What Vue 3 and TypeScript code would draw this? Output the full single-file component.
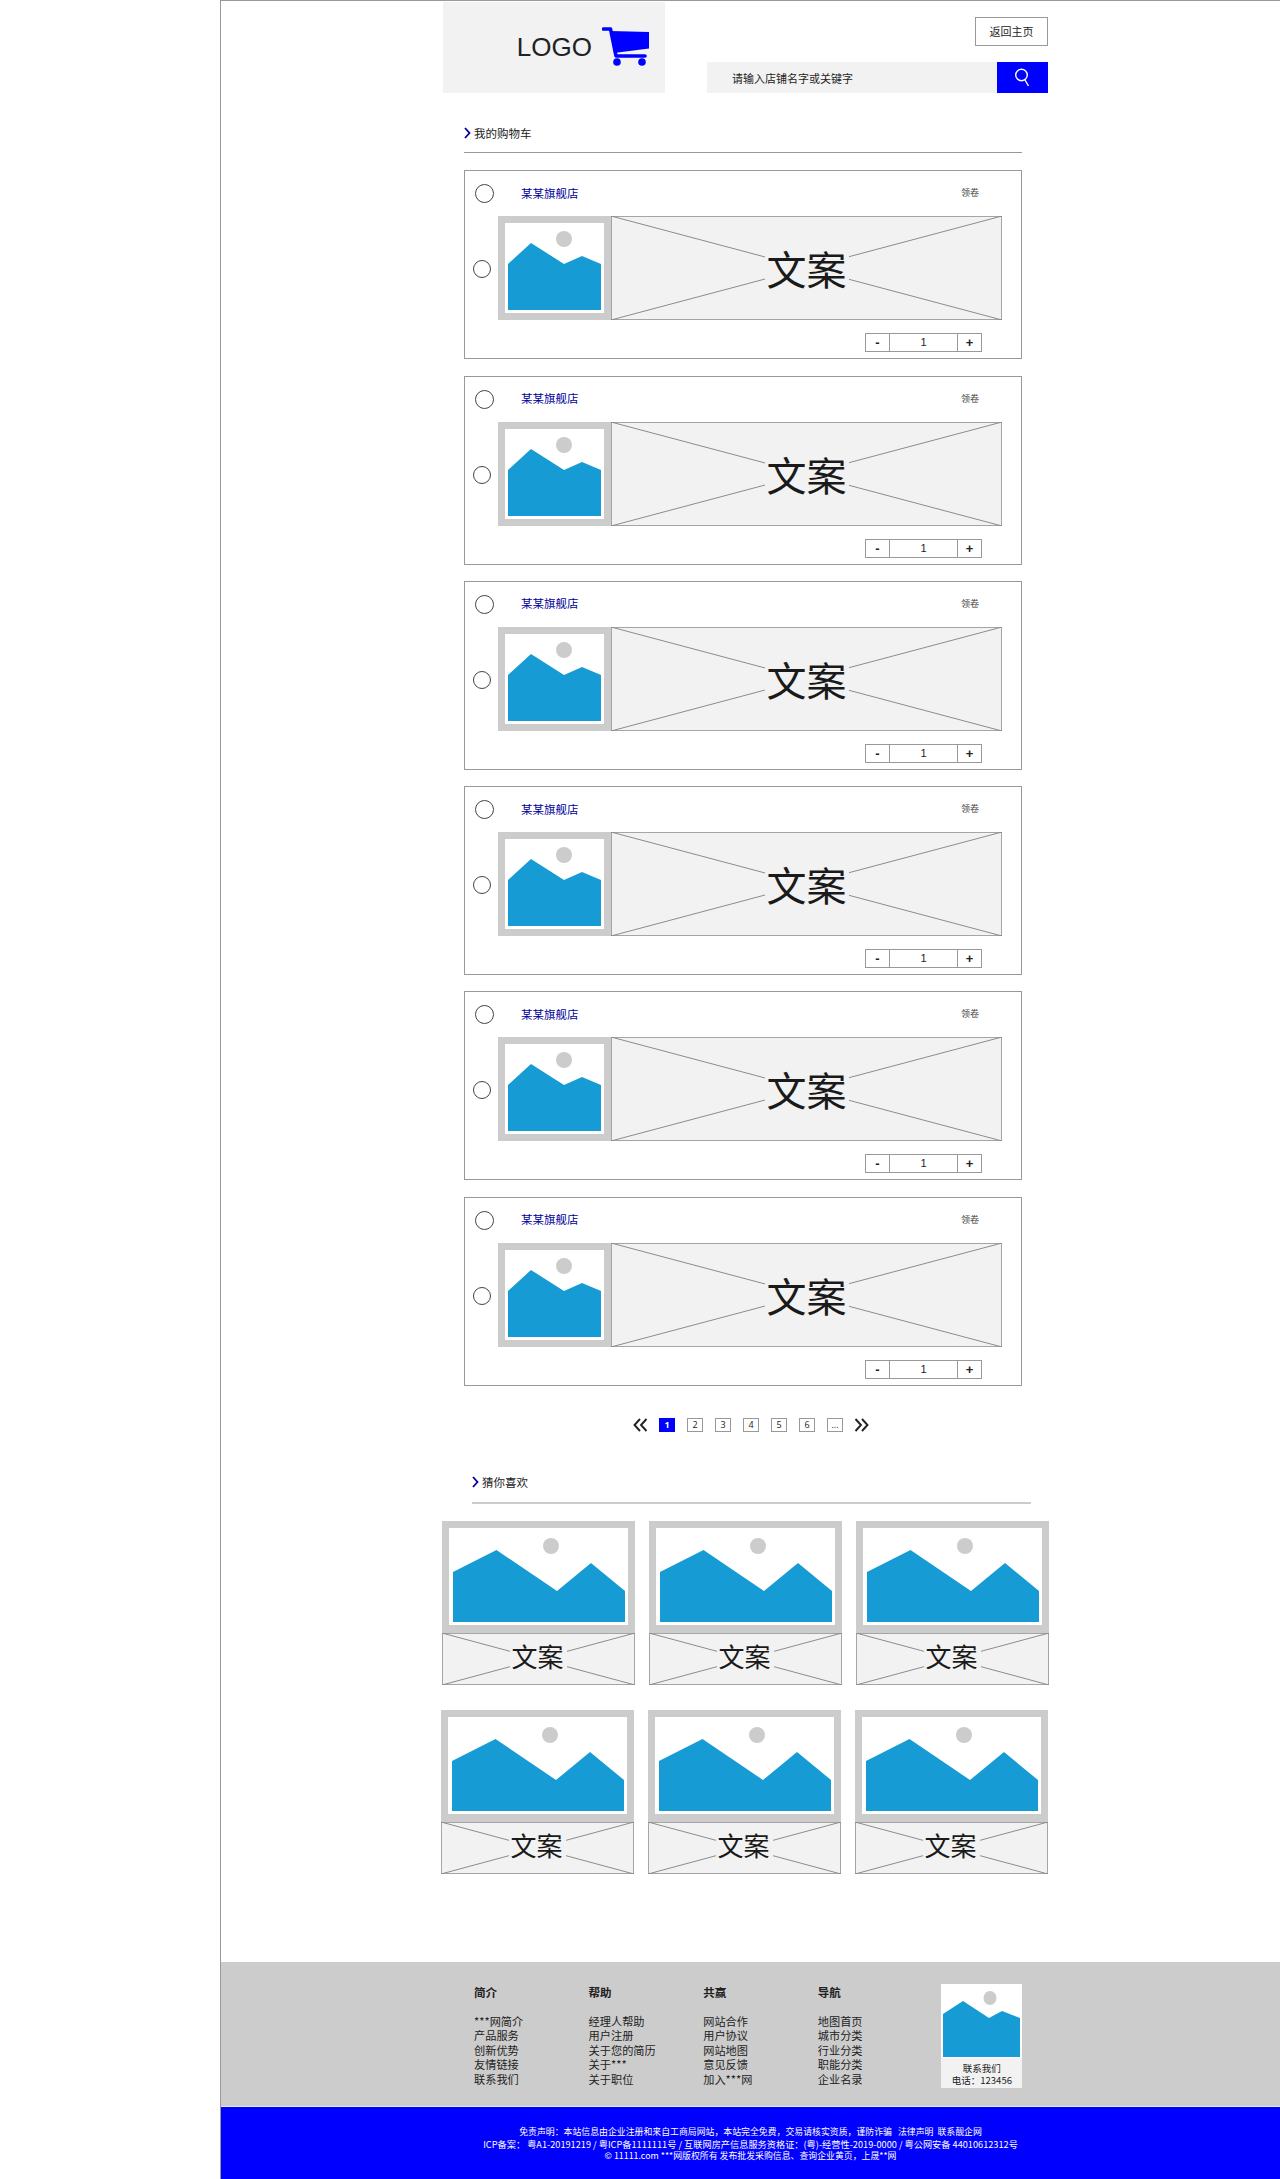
<script setup lang="ts">
const cards = [1, 2, 3, 4, 5, 6]
const pages = ['1', '2', '3', '4', '5', '6', '...']
const recRows = [[1, 2, 3], [1, 2, 3]]
const cols = [
  { title: '简介', items: ['***网简介', '产品服务', '创新优势', '友情链接', '联系我们'] },
  { title: '帮助', items: ['经理人帮助', '用户注册', '关于您的简历', '关于***', '关于职位'] },
  { title: '共赢', items: ['网站合作', '用户协议', '网站地图', '意见反馈', '加入***网'] },
  { title: '导航', items: ['地图首页', '城市分类', '行业分类', '职能分类', '企业名录'] },
]
</script>

<template>
  <div class="page">
    <header class="head">
      <div class="logo">
        <span class="logo-text">LOGO</span>
        <svg class="cart" width="48" height="40" viewBox="0 0 48 40">
          <path d="M1.5 2H8.5L14 29H43" fill="none" stroke="#0000ff" stroke-width="3.6" stroke-linecap="round" stroke-linejoin="round" />
          <path d="M8.5 4L47 5V21.5L12 26Z" fill="#0000ff" />
          <circle cx="15" cy="35" r="3.8" fill="#0000ff" />
          <circle cx="40" cy="35" r="3.8" fill="#0000ff" />
        </svg>
      </div>
      <div class="head-right">
        <div class="back">返回主页</div>
        <div class="search">
          <span class="search-text">请输入店铺名字或关键字</span>
          <div class="search-btn">
            <svg width="18" height="22" viewBox="0 0 18 22">
              <circle cx="7.5" cy="8" r="5.8" fill="none" stroke="#fff" stroke-width="1.4" />
              <path d="M11 13L14.5 19" stroke="#fff" stroke-width="1.4" fill="none" />
            </svg>
          </div>
        </div>
      </div>
    </header>

    <main class="cart-list">
      <div class="title">
        <svg width="7" height="12" viewBox="0 0 7 12"><path d="M1 1L5.5 6L1 11" fill="none" stroke="#000099" stroke-width="1.8" /></svg>
        <span>我的购物车</span>
      </div>
      <article v-for="c in cards" :key="c" class="card">
        <div class="card-top">
          <span class="radio radio-a"></span>
          <span class="shop">某某旗舰店</span>
          <span class="coupon">领卷</span>
        </div>
        <div class="card-mid">
          <span class="radio radio-b"></span>
          <svg class="thumb" width="113" height="104" viewBox="0 0 113 104">
            <rect width="113" height="104" fill="#cccccc" />
            <rect x="7" y="7" width="99" height="90" fill="#fff" />
            <path d="M10 48L33 27L66 48L84 40L103 48V94H10Z" fill="#169bd5" />
            <ellipse cx="66" cy="23" rx="8" ry="8" fill="#cccccc" />
          </svg>
          <div class="wire wire-big">
            <svg preserveAspectRatio="none" viewBox="0 0 100 100">
              <rect width="100" height="100" fill="#f2f2f2" />
              <path d="M0 0L100 100M100 0L0 100" stroke="#8c8c8c" stroke-width="1" vector-effect="non-scaling-stroke" />
              <rect width="100" height="100" fill="none" stroke="#8c8c8c" stroke-width="1.5" vector-effect="non-scaling-stroke" />
            </svg>
            <span class="wire-text">文案</span>
          </div>
        </div>
        <div class="stepper">
          <span class="st-btn">-</span>
          <span class="st-val">1</span>
          <span class="st-btn">+</span>
        </div>
      </article>
    </main>

    <nav class="pager">
      <svg width="15" height="14" viewBox="0 0 15 14"><path d="M7 1L1.5 7L7 13M13.5 1L8 7L13.5 13" fill="none" stroke="#222" stroke-width="1.9" /></svg>
      <span v-for="(p, i) in pages" :key="p" class="pg" :class="{ on: i === 0 }">{{ p }}</span>
      <svg width="15" height="14" viewBox="0 0 15 14"><path d="M1.5 1L7 7L1.5 13M8 1L13.5 7L8 13" fill="none" stroke="#222" stroke-width="1.9" /></svg>
    </nav>

    <section class="rec">
      <div class="title rec-title">
        <svg width="7" height="12" viewBox="0 0 7 12"><path d="M1 1L5.5 6L1 11" fill="none" stroke="#000099" stroke-width="1.8" /></svg>
        <span>猜你喜欢</span>
      </div>
      <div v-for="(row, r) in recRows" :key="r" class="rec-row" :class="{ second: r === 1 }">
        <div v-for="i in row" :key="i" class="rec-item">
          <svg class="rec-img" width="193" height="112" viewBox="0 0 193 112">
            <rect width="193" height="112" fill="#cccccc" />
            <rect x="7" y="7" width="179" height="97" fill="#fff" />
            <path d="M11 51L54.5 29L115 70L149 42L183 70V101H11Z" fill="#169bd5" />
            <circle cx="109" cy="25" r="8" fill="#cccccc" />
          </svg>
          <div class="wire wire-small">
            <svg preserveAspectRatio="none" viewBox="0 0 100 100">
              <rect width="100" height="100" fill="#f2f2f2" />
              <path d="M0 0L100 100M100 0L0 100" stroke="#8c8c8c" stroke-width="1" vector-effect="non-scaling-stroke" />
              <rect width="100" height="100" fill="none" stroke="#8c8c8c" stroke-width="1.5" vector-effect="non-scaling-stroke" />
            </svg>
            <span class="wire-text">文案</span>
          </div>
        </div>
      </div>
    </section>

    <footer class="foot">
      <div class="foot-top">
        <div v-for="c in cols" :key="c.title" class="fcol">
          <h4>{{ c.title }}</h4>
          <p v-for="t in c.items" :key="t">{{ t }}</p>
        </div>
        <div class="contact">
          <svg width="81" height="74" viewBox="0 0 81 74">
            <rect width="81" height="74" fill="#fff" />
            <path d="M2 30L22 17L48 34L61 27L79 34V73H2Z" fill="#169bd5" />
            <ellipse cx="49" cy="14" rx="6.5" ry="7" fill="#cccccc" />
          </svg>
          <div class="contact-text">
            <span>联系我们</span>
            <span>电话：123456</span>
          </div>
        </div>
      </div>
      <div class="foot-bottom">
        <p>免责声明：本站信息由企业注册和来自工商局网站，本站完全免费，交易请核实资质，谨防诈骗&nbsp;&nbsp;&nbsp;法律声明&nbsp;&nbsp;联系靓企网</p>
        <p>ICP备案：&nbsp;粤A1-20191219 / 粤ICP备1111111号 / 互联网房产信息服务资格证：(粤)-经营性-2019-0000 / 粤公网安备 44010612312号</p>
        <p>© 11111.com ***网版权所有 发布批发采购信息、查询企业黄页，上晟**网</p>
      </div>
    </footer>
  </div>
</template>

<style>
html, body { margin: 0; background: #fff; }
</style>

<style scoped>
.page {
  box-sizing: border-box;
  width: 1060px;
  height: 2179px;
  margin-left: 220px;
  border-left: 1px solid #999;
  border-top: 1px solid #999;
  font-family: "Noto Sans CJK SC", "Noto Sans", sans-serif;
  color: #222;
  display: flex;
  flex-direction: column;
  overflow: hidden;
}
.head {
  display: flex;
  margin: 1px 0 0 222px;
  width: 605px;
  height: 91px;
}
.logo {
  width: 222px;
  height: 91px;
  background: #f2f2f2;
  display: flex;
  justify-content: flex-end;
  align-items: flex-start;
  flex: none;
}
.logo-text {
  font: 26px "Liberation Sans", sans-serif;
  color: #222;
  margin: 30px 10px 0 0;
  line-height: 31px;
}
.cart { margin: 25px 15px 0 0; }
.head-right {
  flex: 1;
  display: flex;
  flex-direction: column;
  align-items: flex-end;
}
.back {
  box-sizing: border-box;
  margin-top: 15px;
  width: 73px;
  height: 29px;
  border: 1px solid #999;
  font-size: 11px;
  line-height: 27px;
  text-align: center;
}
.search {
  margin-top: 16px;
  width: 341px;
  height: 31px;
  background: #f2f2f2;
  display: flex;
  align-items: center;
  justify-content: space-between;
}
.search-text { font-size: 11px; margin-left: 25px; }
.search-btn {
  width: 51px;
  height: 31px;
  background: #0000ff;
  display: flex;
  align-items: center;
  justify-content: center;
}
.title {
  display: flex;
  align-items: center;
  gap: 3px;
  height: 60px;
  font-size: 11.5px;
  border-bottom: 1px solid #999;
  box-sizing: border-box;
  padding-top: 20px;
}
.cart-list {
  margin-left: 243px;
  width: 558px;
  display: flex;
  flex-direction: column;
  gap: 16.3px;
}
.cart-list .title { margin-bottom: 1px; }
.card {
  box-sizing: border-box;
  height: 189px;
  border: 1px solid #999;
  padding: 0 14px 0 10px;
  display: flex;
  flex-direction: column;
}
.card-top {
  height: 45px;
  display: flex;
  align-items: center;
  flex: none;
}
.radio {
  box-sizing: border-box;
  border: 1.5px solid #444;
  border-radius: 50%;
  flex: none;
}
.radio-a { width: 19px; height: 19px; margin-right: 27px; }
.radio-b { width: 18px; height: 18px; margin: 2px 7px 0 -2px; }
.shop { font-size: 11.5px; color: #000099; margin-bottom: 2px; }
.coupon { font-size: 9px; margin: 0 28px 2px auto; color: #444; }
.card-mid { display: flex; align-items: center; height: 104px; flex: none; }
.thumb { flex: none; }
.wire { display: grid; place-items: center; flex: none; }
.wire > * { grid-area: 1 / 1; }
.wire svg { width: 100%; height: 100%; display: block; }
.wire-big { width: 391px; height: 104px; }
.wire-big .wire-text { font-size: 40px; line-height: 44px; padding: 0 2px; }
.wire-small { width: 193px; height: 52px; }
.wire-small .wire-text { font-size: 26px; line-height: 30px; padding: 0 3px 6px 1px; }
.wire-text { background: #f2f2f2; color: #1a1a1a; }
.stepper {
  margin: 13px 25px 0 auto;
  width: 117px;
  height: 19px;
  box-sizing: border-box;
  border: 1px solid #999;
  display: flex;
  font: 11px/17px "Liberation Sans", sans-serif;
  color: #222;
  text-align: center;
}
.st-btn { width: 23px; font-weight: bold; font-size: 13px; flex: none; }
.st-val {
  flex: 1;
  border-left: 1px solid #999;
  border-right: 1px solid #999;
}
.pager {
  margin: 32px 0 0 412px;
  height: 14px;
  display: flex;
  align-items: center;
  gap: 12px;
}
.pager svg { flex: none; margin-right: -1px; }
.pager svg:last-child { margin-left: -1px; }
.pg {
  box-sizing: border-box;
  width: 16px;
  height: 14px;
  border: 1px solid #999;
  font: 9px/12px "Open Sans", sans-serif;
  text-align: center;
  color: #222;
}
.pg.on { background: #0000ff; border-color: #0000ff; color: #fff; font-weight: bold; }
.rec { margin-left: 221px; }
.rec-title {
  margin: 9px 0 17px 30px;
  width: 559px;
  height: 63px;
  padding-top: 21px;
  border-bottom-width: 2px;
  border-bottom-color: #ccc;
}
.rec-row { display: flex; gap: 14px; margin-bottom: 25px; height: 164px; }
.rec-row.second { margin-left: -1px; }
.rec-item { width: 193px; display: flex; flex-direction: column; }
.rec-img { flex: none; display: block; }
.foot {
  margin-top: auto;
}
.foot-top {
  height: 144px;
  background: #ccc;
  border-bottom: 1px solid #e8e8e8;
  display: flex;
  padding-left: 253px;
}
.fcol { width: 114.6px; padding-top: 21px; font-size: 11.2px; line-height: 14.4px; }
.fcol h4 { margin: 0 0 13px; font-size: 11.5px; font-weight: bold; line-height: 18px; }
.fcol p { margin: 0; white-space: nowrap; }
.contact {
  margin: 22px 0 0 9px;
  width: 81px;
  height: 104px;
  background: #f2f2f2;
}
.contact svg { display: block; }
.contact-text {
  display: flex;
  flex-direction: column;
  align-items: center;
  font-size: 9.5px;
  line-height: 12px;
  padding-top: 4px;
}
.foot-bottom {
  height: 72px;
  background: #0000ff;
  color: #fff;
  font-size: 9.2px;
  line-height: 12px;
  text-align: center;
  padding-top: 19px;
  box-sizing: border-box;
}
.foot-bottom p { margin: 0; white-space: nowrap; }
.foot-bottom p:nth-child(odd) { font-size: 8.9px; }
</style>
